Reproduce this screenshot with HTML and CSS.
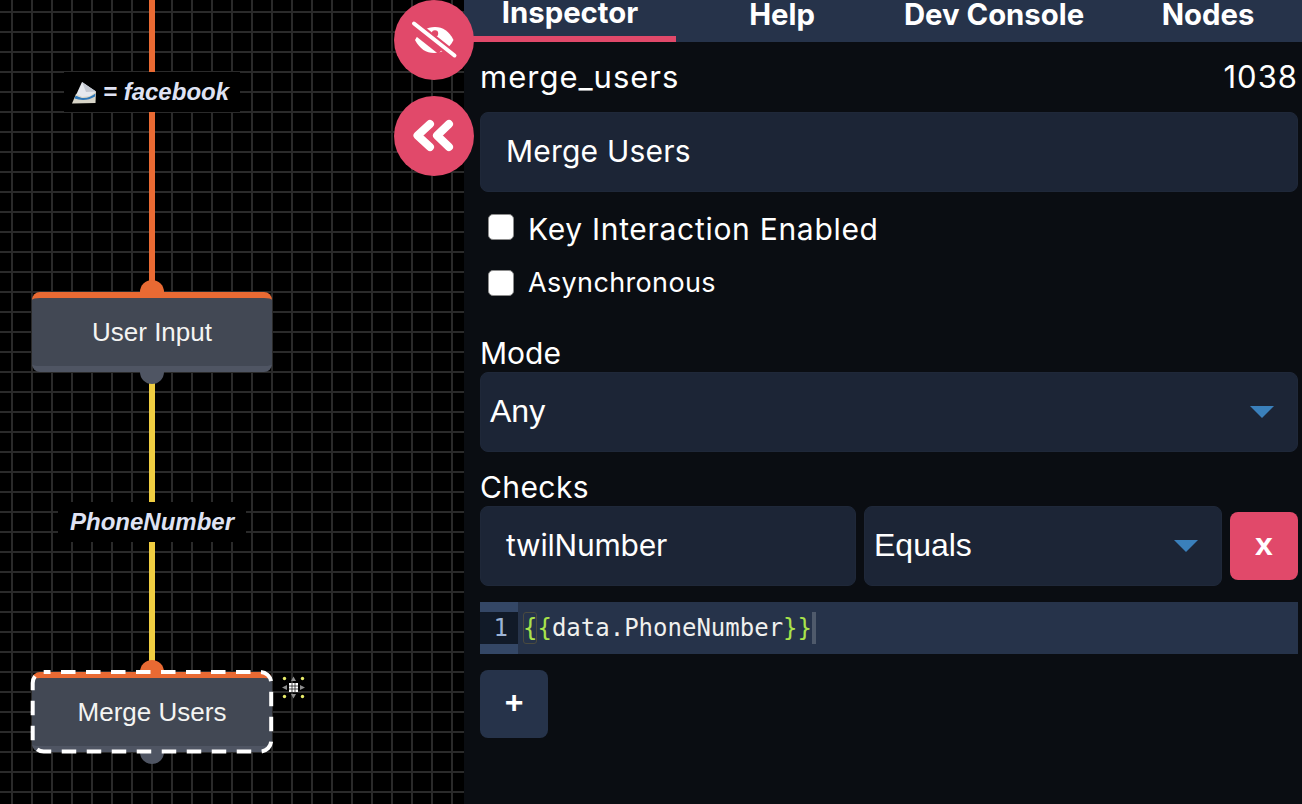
FILE: index.html
```html
<!DOCTYPE html>
<html lang="en">
<head>
<meta charset="utf-8">
<title>Merge Users</title>
<link rel="stylesheet" href="styles.css">
</head>
<body>
<div class="app">
  <section class="canvas">
    <div class="edge edge-orange edge-top"></div>
    <div class="edge edge-yellow edge-mid"></div>
    <div class="edge edge-yellow edge-low"></div>
    <div class="edge-label label-fb">
      <svg class="inbox" viewBox="0 0 24 23" width="24" height="23"><path d="M0 22.500 4 13 24 10.500 23.500 22Z" fill="#d8d5c8"/><path d="M4.500 13 10 1 24 10.500 18 15 10 16Z" fill="#e6e9ee"/><path d="M10 1 14 11 24 10.500Z" fill="#c4c9d2"/><path d="M3.500 15c3 0 4 2 8 2 5 0 8-2 12-4.500L23 15.500c-4 2.500-8 3.500-12 3.500-3 0-6-1-8.500-1.500Z" fill="#2f78b8"/></svg>
      <span>= facebook</span>
    </div>
    <div class="edge-label label-phone"><span>PhoneNumber</span></div>

    <div class="handle handle-out ho-a"></div>
    <div class="handle handle-in hi-a"></div>
    <div class="node node-a">User Input</div>

    <div class="handle handle-out ho-b"></div>
    <div class="handle handle-in hi-b"></div>
    <div class="node node-b">Merge Users</div>
    <svg class="selection" viewBox="0 0 246 86" width="246" height="86"><rect x="2.700" y="2" width="238.500" height="79.500" rx="11" fill="none" stroke="#fff" stroke-width="4" stroke-dasharray="14.500 10.500" stroke-dashoffset="7.700"/></svg>
    <svg class="node-tag" viewBox="0 0 26 26" width="26" height="26">
      <circle cx="3.500" cy="3.500" r="1.700" fill="#e8ec6a"/><circle cx="21.500" cy="3.500" r="1.700" fill="#e8ec6a"/><circle cx="3.500" cy="21.500" r="1.700" fill="#e8ec6a"/><circle cx="21.500" cy="21.500" r="1.700" fill="#e8ec6a"/>
      <path d="M12.500 1.500 15 6H10ZM12.500 23.500 15 19H10ZM1 12.500 6 10V15ZM24 12.500 19 10V15Z" fill="#8d8d8d"/>
      <rect x="8" y="8" width="9" height="9" fill="#fff"/><path d="M11 8V17M14 8V17M8 11H17M8 14H17" stroke="#222" stroke-width="0.800"/>
    </svg>
  </section>

  <main class="panel">
    <nav class="tabs">
      <div class="tab tab-active">Inspector</div>
      <div class="tab">Help</div>
      <div class="tab">Dev Console</div>
      <div class="tab tab-nodes">Nodes</div>
    </nav>
    <div class="body">
      <div class="title-row"><span>merge_users</span><span>1038</span></div>
      <div class="field field-name">Merge Users</div>
      <label class="check check-large"><span class="box"></span>Key Interaction Enabled</label>
      <label class="check check-small"><span class="box"></span>Asynchronous</label>
      <div class="section-label label-mode">Mode</div>
      <div class="field field-select">Any<span class="caret"></span></div>
      <div class="section-label label-checks">Checks</div>
      <div class="check-row">
        <div class="field field-var">twilNumber</div>
        <div class="field field-op">Equals<span class="caret"></span></div>
        <button class="btn btn-x">x</button>
      </div>
      <div class="editor">
        <div class="gutter"><span>1</span></div>
        <div class="code"><span class="brace brace-match">{</span><span class="brace">{</span>data.PhoneNumber<span class="brace">}}</span><span class="cursor"></span></div>
      </div>
      <button class="btn btn-add">+</button>
    </div>
  </main>

  <button class="fab fab-eye">
    <svg viewBox="0 0 48 40" width="48" height="40"><defs><mask id="eyemask"><rect width="48" height="40" fill="#fff"/><path d="M0 .500 48 38.500" stroke="#000" stroke-width="8.500"/><path d="M6 13 30 32" stroke="#000" stroke-width="5"/><circle cx="25" cy="13.500" r="3.200" fill="#000"/></mask></defs><path d="M5 20C10 11 17 7 25 7s14 4 18.500 13C39 29 32 33 24 33S10 29 5 20Z" fill="#fff" mask="url(#eyemask)"/><path d="M4 3.500 44.500 35.500" stroke="#fff" stroke-width="4" stroke-linecap="round"/></svg>
  </button>
  <button class="fab fab-back">
    <svg viewBox="0 0 44 34" width="44" height="34"><path d="M18 5 5.500 16.500 18 28M37 5 25 16.500 37 28" fill="none" stroke="#fff" stroke-width="8" stroke-linecap="round" stroke-linejoin="round"/></svg>
  </button>
</div>
</body>
</html>
```
FILE: styles.css
```css
* { box-sizing: border-box; }
html, body { margin: 0; padding: 0; height: 100%; overflow: hidden; background: #000; }
.app { position: relative; display: flex; width: 1302px; height: 804px; overflow: hidden; font-family: "Inter", "Liberation Sans", sans-serif; color: #fff; }

.canvas {
  position: relative; flex: 0 0 464px; height: 804px; background-color: #000;
  background-image: linear-gradient(#2a2a2a 2px, transparent 2px), linear-gradient(90deg, #2a2a2a 2px, transparent 2px);
  background-size: 20px 20px; background-position: 11px 11px;
  font-family: "Liberation Sans", Arial, sans-serif;
}
.edge { position: absolute; left: 149px; width: 6px; }
.edge-orange { background: #e96a33; }
.edge-yellow { background: #efcd41; }
.edge-top { top: 0; height: 290px; }
.edge-mid { top: 383px; height: 127px; }
.edge-low { top: 530px; height: 135px; }
.edge-label {
  position: absolute; display: flex; align-items: center; height: 40px;
  background: #000; color: #dfe2f3; font-weight: 700; font-style: italic; font-size: 24px; white-space: nowrap;
}
.label-fb { left: 64px; top: 72px; width: 176px; padding-left: 8px; gap: 7px; }
.label-phone { left: 58px; top: 502px; width: 188px; justify-content: center; }
.inbox { flex: none; }
.node {
  position: absolute; left: 32px; width: 240px; height: 80px; display: flex; align-items: center; justify-content: center;
  background: #424854; border-top: 6px solid #e96a33; border-bottom: 6px solid #4f5563; border-radius: 8px;
  font-size: 26px; color: #f4f4f2;
}
.node-a { top: 292px; }
.node-b { top: 672px; }
.handle { position: absolute; left: 140px; width: 24px; height: 24px; border-radius: 50%; }
.handle-in { background: #e96a33; }
.handle-out { background: #4f5563; }
.hi-a { top: 280px; }
.ho-a { top: 360px; }
.hi-b { top: 660px; }
.ho-b { top: 740px; }
.selection { position: absolute; left: 30px; top: 670px; }
.node-tag { position: absolute; left: 281px; top: 675px; }

.panel { flex: 1 1 auto; min-width: 0; height: 804px; background: #0a0d12; display: flex; flex-direction: column; }
.tabs { display: flex; flex: none; height: 42px; background: #26334a; overflow: hidden; }
.tab { flex: 0 0 212px; height: 42px; text-align: center; font-size: 29.300px; font-weight: 700; line-height: 30px; }
.tab-active { border-bottom: 6px solid #e1496a; line-height: 25px; }
.tab-nodes { padding-left: 4px; }
.body { display: flex; flex-direction: column; align-items: stretch; padding: 0 4px 0 16px; }
.title-row { display: flex; justify-content: space-between; height: 70px; padding-top: 16px; font-size: 31px; letter-spacing: 1px; line-height: 38px; }
.field { position: relative; display: flex; align-items: center; height: 80px; padding-bottom: 2px; background: #1c2536; border: 1px solid #1f2839; border-radius: 8px; font-size: 30px; }
.field-name { padding-left: 25px; margin-bottom: 16px; letter-spacing: 0.200px; }
.check { display: flex; align-items: center; gap: 14px; padding-left: 8px; }
.check-large { height: 42px; font-size: 30px; letter-spacing: 0.700px; margin-bottom: 12px; }
.check-large .box { margin-bottom: 4px; }
.check-small { height: 42px; font-size: 27px; letter-spacing: 0.350px; margin-bottom: 31px; padding-bottom: 2px; }
.check-small .box { margin-top: 2px; }
.box { flex: none; width: 26px; height: 26px; background: #fff; border-radius: 5px; border: 1.500px solid #8c8c8c; }
.section-label { font-size: 30px; line-height: 38px; height: 38px; }
.label-mode { margin-bottom: -1px; line-height: 36px; }
.field-select { padding-left: 9px; margin-bottom: 16px; font-family: "Liberation Sans", Arial, sans-serif; font-size: 32px; }
.caret { position: absolute; right: 23px; top: 33px; width: 0; height: 0; border-left: 12px solid transparent; border-right: 12px solid transparent; border-top: 12px solid #3a80bb; }
.label-checks { letter-spacing: 0.400px; }
.check-row { display: flex; align-items: center; gap: 8px; height: 80px; margin-bottom: 16px; }
.field-var { flex: 0 0 376px; padding-left: 25px; letter-spacing: -0.200px; }
.field-op { flex: 0 0 358px; padding-left: 9px; font-family: "Liberation Sans", Arial, sans-serif; font-size: 32px; }
.btn { flex: none; width: 68px; height: 68px; border: 0; border-radius: 8px; color: #fff; font: 700 32px "Liberation Sans", Arial, sans-serif; padding: 0 0 4px; }
.btn-x { background: #e1496a; }
.btn-add { background: #26334a; }
.editor { display: flex; height: 52px; background: #26334a; margin-bottom: 16px; }
.gutter { flex: 0 0 38px; display: flex; align-items: center; background: #344766; }
.gutter span { display: block; width: 100%; height: 32px; background: #111a28; color: #9db4d6; font: 24px/32px "DejaVu Sans Mono", monospace; text-align: right; padding-right: 10px; }
.code { display: flex; align-items: center; padding-left: 5px; font: 24px/32px "DejaVu Sans Mono", monospace; color: #f0f0ee; }
.brace { color: #a9e34b; }
.brace-match { outline: 1px solid #4a4a3f; outline-offset: -1px; border-radius: 3px; }
.cursor { display: block; width: 4px; height: 32px; background: #4f5a6b; }

.fab { position: absolute; left: 394px; width: 80px; height: 80px; display: flex; align-items: center; justify-content: center; border: 0; padding: 0; border-radius: 50%; background: #e1496a; }
.fab-eye { top: 0; }
.fab-back { top: 96px; }
```
